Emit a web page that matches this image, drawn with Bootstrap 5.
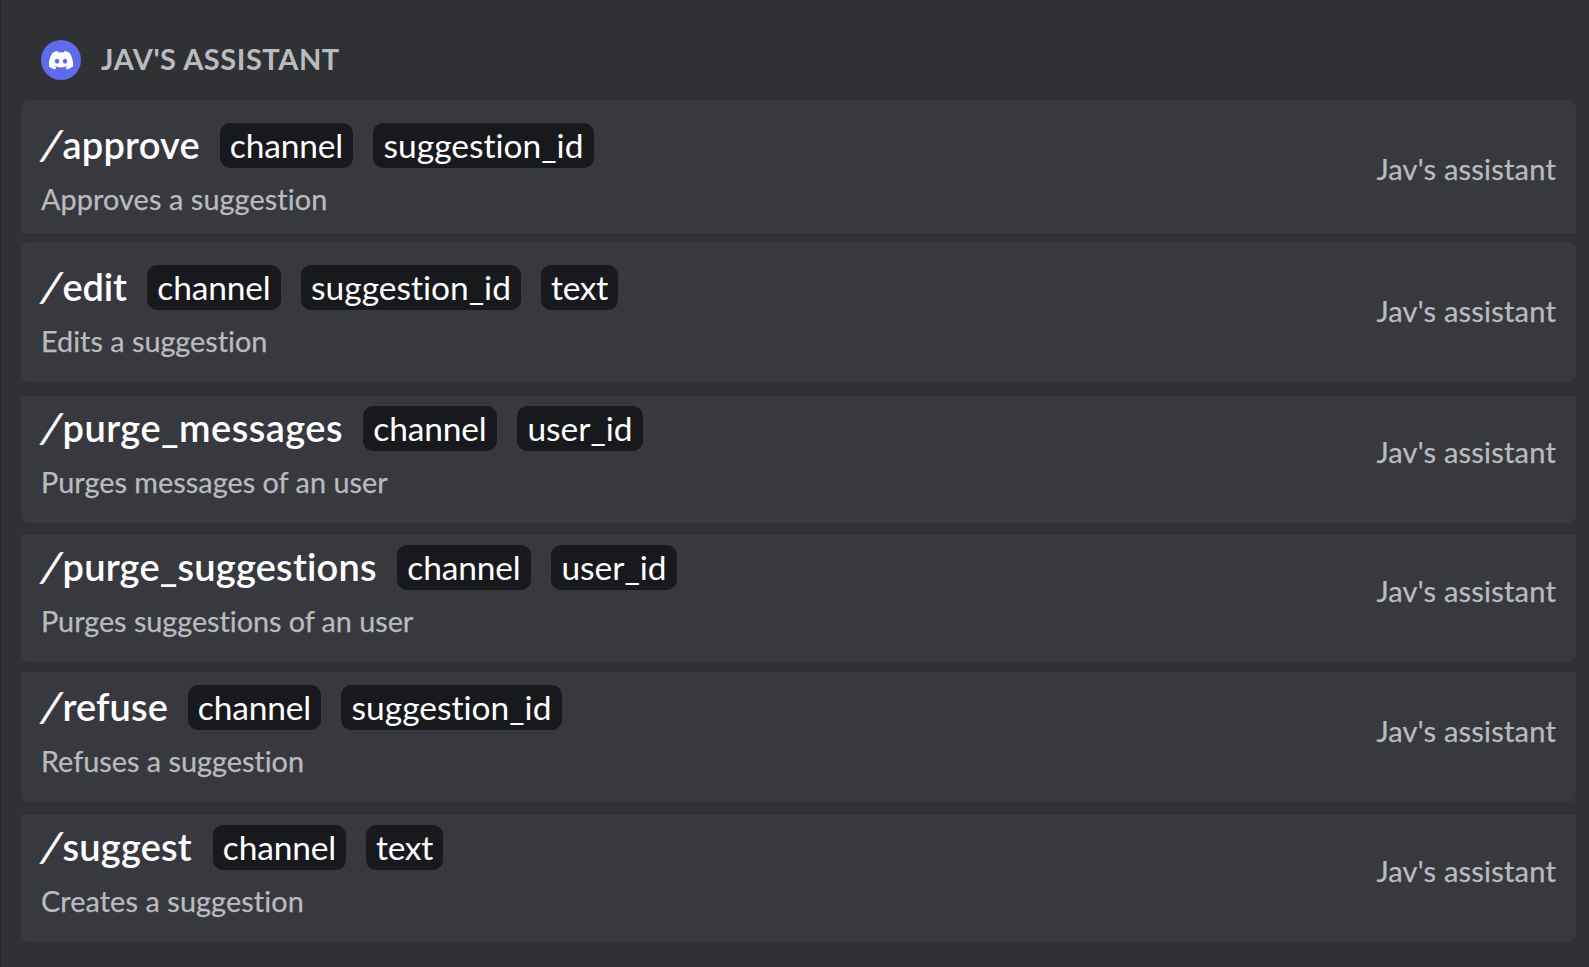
<!DOCTYPE html>
<html lang="en">
<head>
<meta charset="utf-8">
<title>Jav's assistant commands</title>
<link href="https://cdn.jsdelivr.net/npm/bootstrap@5.3.0/dist/css/bootstrap.min.css" rel="stylesheet">
<style>
body{background:#303135;font-family:Lato,"Open Sans",sans-serif;font-variant-ligatures:none;color:#b9bbbe;min-height:967px;overflow:hidden}
.panel{border-left:1px solid #232428;min-height:967px;padding:40px 13px 0 20px}
.app-head{height:40px;margin:0 20px 20px;gap:20px}
.app-title{font-size:29px;line-height:38px;font-weight:700;letter-spacing:.55px;margin:0}
.cmd{background:#38393e;padding:10px 20px 0;border-radius:0 0 8px 8px;white-space:nowrap}
.cmd-approve{height:133px;padding-top:23px;border-radius:8px 8px 0 0;margin-bottom:9px}
.cmd-edit{height:140px;padding-top:23px;border-radius:8px;margin-bottom:14px}
.cmd-messages{height:127px;margin-bottom:12px}
.cmd-suggestions{height:127px;margin-bottom:10px}
.cmd-refuse{height:130px;padding-top:13px;margin-bottom:13px}
.cmd-suggest{height:127px}
.line{height:45px;gap:20px}
.name{color:#fff;font-size:38px;line-height:43px;font-weight:600;letter-spacing:.2px;width:159px}
.name .slash{display:inline-block;width:21.5px;padding-left:2px;transform:skewX(-15deg) scaleY(1.06);-webkit-text-stroke:.4px #fff}
.cmd-edit .name{width:86px;letter-spacing:-.2px}
.cmd-messages .name{width:302px;letter-spacing:.45px}
.cmd-suggestions .name{width:336px}
.cmd-refuse .name{width:127px;letter-spacing:.1px}
.cmd-suggest .name{width:152px}
.opt{background:#18191c;color:#fff;border-radius:10px;font-size:33.5px;line-height:44px;height:45px;text-align:center}
.opt-channel{width:133px;letter-spacing:-.15px}
.cmd-edit .opt-channel,.cmd-messages .opt-channel,.cmd-suggestions .opt-channel{width:134px}
.opt-sid{width:221px}
.cmd-edit .opt-sid{width:220px}
.opt-text{width:77px;letter-spacing:-.3px}
.opt-uid{width:126px}
.desc{font-size:28.8px;line-height:35px;margin-top:14px;-webkit-text-stroke:.25px currentColor}
.cmd-approve .desc,.cmd-suggest .desc{letter-spacing:.1px}
.cmd-messages .desc{letter-spacing:.03px}
.cmd-suggestions .desc{letter-spacing:-.04px}
.owner{font-size:29px;line-height:34px;letter-spacing:.2px;margin-top:29px;-webkit-text-stroke:.25px currentColor}
</style>
</head>
<body>
<main class="panel">
<header class="app-head d-flex align-items-start">
<svg width="40" height="40" viewBox="0 0 40 40" aria-hidden="true"><circle cx="20" cy="20" r="20" fill="#5f6be8"/><g transform="translate(7.9 11.1) scale(.1905)"><path fill="#fff" d="M107.7 8.07A105.15 105.15 0 0 0 81.47 0a72.06 72.06 0 0 0-3.36 6.83 97.68 97.68 0 0 0-29.11 0A72.37 72.37 0 0 0 45.64 0a105.89 105.89 0 0 0-26.25 8.09C2.79 32.65-1.71 56.6.54 80.21a105.73 105.73 0 0 0 32.17 16.15 77.7 77.7 0 0 0 6.89-11.11 68.42 68.42 0 0 1-10.85-5.18c.91-.66 1.8-1.34 2.66-2a75.57 75.57 0 0 0 64.32 0c.87.71 1.76 1.39 2.66 2a68.68 68.68 0 0 1-10.87 5.19 77 77 0 0 0 6.89 11.1 105.25 105.25 0 0 0 32.19-16.14c2.64-27.38-4.51-51.11-18.9-72.15ZM42.45 65.69C36.18 65.69 31 60 31 53s5-12.74 11.43-12.74S54 46 53.89 53s-5.05 12.69-11.44 12.69Zm42.24 0C78.41 65.69 73.25 60 73.25 53s5-12.74 11.44-12.74S96.23 46 96.12 53s-5.04 12.69-11.43 12.69Z"/></g></svg>
<h1 class="app-title">JAV'S ASSISTANT</h1>
</header>

<section class="cmd cmd-approve d-flex justify-content-between align-items-start">
<div><div class="line d-flex"><div class="name"><span class="slash">/</span>approve</div><span class="opt opt-channel">channel</span><span class="opt opt-sid">suggestion_id</span></div><div class="desc">Approves a suggestion</div></div>
<div class="owner">Jav's assistant</div>
</section>

<section class="cmd cmd-edit d-flex justify-content-between align-items-start">
<div><div class="line d-flex"><div class="name"><span class="slash">/</span>edit</div><span class="opt opt-channel">channel</span><span class="opt opt-sid">suggestion_id</span><span class="opt opt-text">text</span></div><div class="desc">Edits a suggestion</div></div>
<div class="owner">Jav's assistant</div>
</section>

<section class="cmd cmd-messages d-flex justify-content-between align-items-start">
<div><div class="line d-flex"><div class="name"><span class="slash">/</span>purge_messages</div><span class="opt opt-channel">channel</span><span class="opt opt-uid">user_id</span></div><div class="desc">Purges messages of an user</div></div>
<div class="owner">Jav's assistant</div>
</section>

<section class="cmd cmd-suggestions d-flex justify-content-between align-items-start">
<div><div class="line d-flex"><div class="name"><span class="slash">/</span>purge_suggestions</div><span class="opt opt-channel">channel</span><span class="opt opt-uid">user_id</span></div><div class="desc">Purges suggestions of an user</div></div>
<div class="owner">Jav's assistant</div>
</section>

<section class="cmd cmd-refuse d-flex justify-content-between align-items-start">
<div><div class="line d-flex"><div class="name"><span class="slash">/</span>refuse</div><span class="opt opt-channel">channel</span><span class="opt opt-sid">suggestion_id</span></div><div class="desc">Refuses a suggestion</div></div>
<div class="owner">Jav's assistant</div>
</section>

<section class="cmd cmd-suggest d-flex justify-content-between align-items-start">
<div><div class="line d-flex"><div class="name"><span class="slash">/</span>suggest</div><span class="opt opt-channel">channel</span><span class="opt opt-text">text</span></div><div class="desc">Creates a suggestion</div></div>
<div class="owner">Jav's assistant</div>
</section>
</main>
<script src="https://cdn.jsdelivr.net/npm/bootstrap@5.3.0/dist/js/bootstrap.bundle.min.js"></script>
</body>
</html>
